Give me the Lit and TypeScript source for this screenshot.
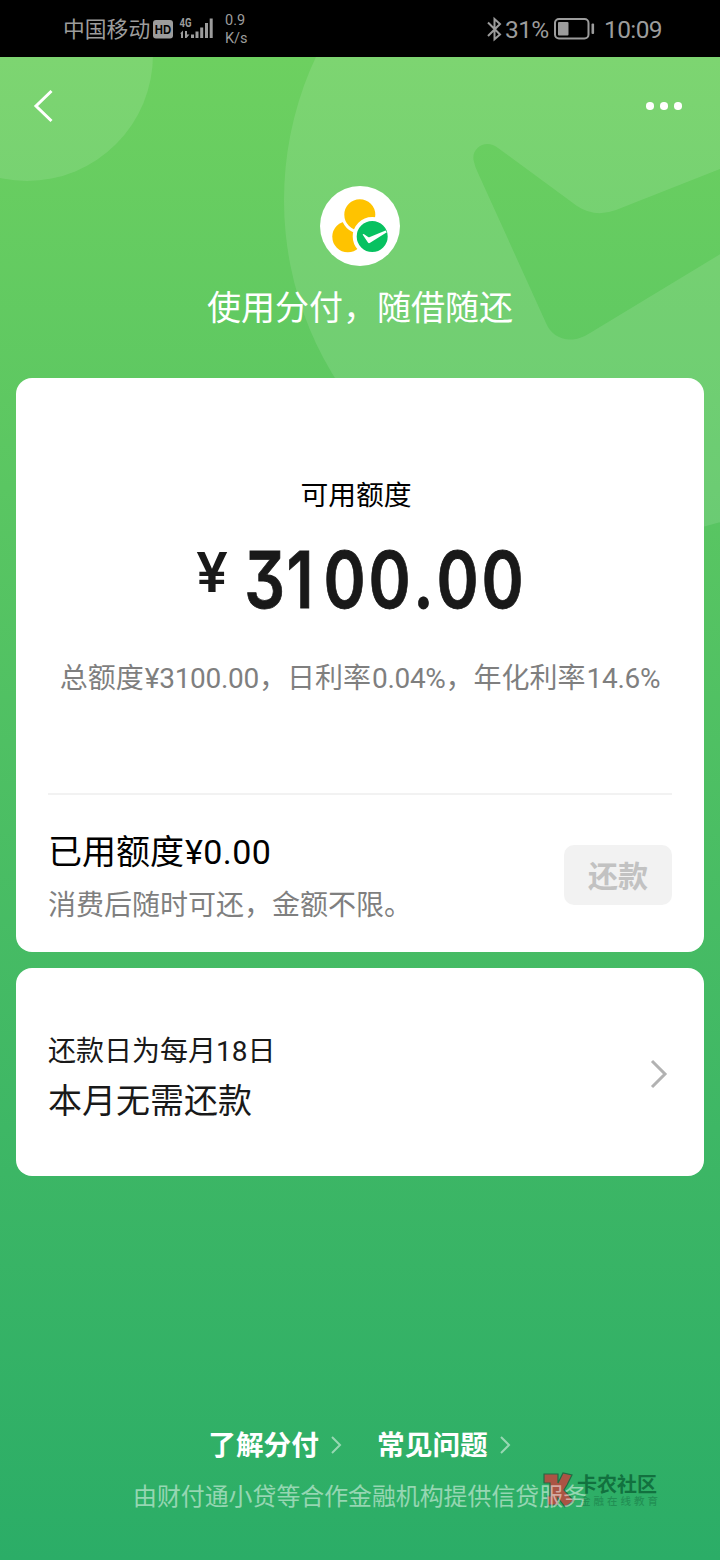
import { LitElement, html, css, svg } from "lit";
import { customElement, property } from "lit/decorators.js";

const fonts = css`Roboto, "Noto Sans CJK SC", sans-serif`;

@customElement("status-bar")
class StatusBar extends LitElement {
  static styles = css`
    :host {
      display: flex;
      align-items: flex-start;
      height: 57px;
      box-sizing: border-box;
      background: #000;
      color: #9c9c9c;
      padding: 0 58px 0 63px;
      font-family: ${fonts};
      white-space: nowrap;
    }
    .carrier { font-size: 21.800px; line-height: 60px; height: 57px; width: 89px; }
    .signal { width: 64px; height: 57px; display: block; }
    .rate { font-size: 14.5px; line-height: 18px; padding-top: 12px; margin-left: 9px; }
    .right { margin-left: auto; display: flex; height: 57px; line-height: 60px; font-size: 24.500px; }
    .icon { width: 16px; height: 57px; display: block; margin-right: 2px; }
    .battery { width: 42px; height: 57px; display: block; margin: 0 9px 0 4px; }
    .pct { letter-spacing: -0.6px; width: 44px; }
    .time { letter-spacing: -0.6px; width: 58px; }
  `;
  render() {
    return html`
      <span class="carrier">中国移动</span>
      <svg class="signal" viewBox="152 0 64 57">
        <rect x="153" y="20" width="20" height="18.500" rx="3" fill="#9c9c9c" />
        <text x="154.800" y="34" font-family="Liberation Sans" font-weight="700" font-size="12" textLength="16.400" lengthAdjust="spacingAndGlyphs" fill="#000">HD</text>
        <text x="179.500" y="27.300" font-family="Roboto" font-weight="700" font-size="12" textLength="12" lengthAdjust="spacingAndGlyphs" fill="#9c9c9c">4G</text>
        <g fill="#9c9c9c">
          <path d="M180 33.500l3-3V38h-2v-4.500zM185 31h2v3.500h2.500L186.500 38H185z" />
          <rect x="191" y="34.500" width="3" height="3.500" />
          <rect x="195.500" y="31.500" width="3" height="6.500" />
          <rect x="200.200" y="27.500" width="3" height="10.500" />
          <rect x="205" y="23" width="3" height="15" />
          <rect x="209.700" y="18.500" width="3" height="19.500" />
        </g>
      </svg>
      <div class="rate"><div>0.9</div><div>K/s</div></div>
      <div class="right">
        <svg class="icon" viewBox="487 0 16 57" fill="none" stroke="#9c9c9c" stroke-width="2">
          <path d="M488 22.500l12 12-5.500 4.800V19l5.500 5-12 12" />
        </svg>
        <span class="pct">31%</span>
        <svg class="battery" viewBox="553 0 42 57">
          <rect x="555" y="19" width="33.500" height="19.500" rx="4" fill="none" stroke="#9c9c9c" stroke-width="2" />
          <rect x="558" y="22" width="10.500" height="13.500" rx="1" fill="#9c9c9c" />
          <rect x="591.500" y="23.500" width="2.600" height="10.500" rx="1" fill="#9c9c9c" />
        </svg>
        <span class="time">10:09</span>
      </div>
    `;
  }
}

@customElement("chevron-icon")
class ChevronIcon extends LitElement {
  @property() points = "";
  @property({ type: Number }) w = 16;
  @property({ type: Number }) h = 28;
  @property({ type: Number }) thick = 3;
  static styles = css`
    :host { display: block; line-height: 0; }
    svg { overflow: visible; }
  `;
  render() {
    return html`<svg width=${this.w} height=${this.h} fill="none" stroke="currentColor" stroke-width=${this.thick} stroke-linejoin="miter">
      ${svg`<polyline points=${this.points} />`}
    </svg>`;
  }
}

@customElement("app-root")
class AppRoot extends LitElement {
  static styles = css`
    :host {
      display: flex;
      flex-direction: column;
      position: relative;
      width: 720px;
      height: 1560px;
      overflow: hidden;
      font-family: ${fonts};
      color: #191919;
      background: linear-gradient(180deg, #6dd060 57px, #2bad67 1560px);
      white-space: nowrap;
    }
    .backdrop { position: absolute; left: 0; top: 0; width: 720px; height: 560px; z-index: 0; }
    status-bar, .nav, .hero, .card, .footer { position: relative; z-index: 1; }
    .nav {
      height: 98px;
      box-sizing: border-box;
      padding: 0 38.500px 0 33.500px;
      display: flex;
      align-items: center;
      justify-content: space-between;
      color: #fff;
    }
    .more { display: flex; gap: 6.500px; }
    .more i { width: 7.500px; height: 7.500px; border-radius: 50%; background: #fff; }
    .hero { display: flex; flex-direction: column; align-items: center; padding-top: 31px; height: 192px; }
    .logo { width: 80px; height: 80px; display: block; }
    .title { color: #fff; font-size: 34px; line-height: 48px; margin-top: 18px; }
    .card { background: #fff; border-radius: 16px; margin: 0 16px; padding: 0 32px; box-sizing: border-box; }
    .quota { height: 574px; padding-top: 98px; display: flex; flex-direction: column; align-items: center; }
    .label { font-size: 27.800px; line-height: 40px; color: #000; margin-right: 8px; }
    .amount { display: block; width: 340px; height: 80px; margin-top: 24px; overflow: visible; }
    .digits { font-feature-settings: "cv09"; }
    .terms { font-size: 28px; line-height: 40px; color: #7f7f7f; margin-top: 39px; }
    .num { letter-spacing: -0.3px; margin-left: 1px; }
    .used {
      align-self: stretch;
      border-top: 2px solid #f2f2f2;
      margin-top: 94px;
      padding-top: 33px;
      display: flex;
      justify-content: space-between;
    }
    .used-title { font-size: 34px; line-height: 48px; color: #000; }
    .money { letter-spacing: 0.4px; margin-left: 1px; }
    .used-note { font-size: 28px; line-height: 40px; color: #7f7f7f; margin-top: 10px; }
    .repay {
      width: 108px;
      height: 60px;
      margin-top: 17px;
      border-radius: 10px;
      background: #f2f2f2;
      color: #c2c2c2;
      font-size: 30px;
      font-weight: 700;
      line-height: 64px;
      text-align: center;
    }
    .plan { height: 208px; margin-top: 16px; padding-right: 37px; display: flex; align-items: center; justify-content: space-between; }
    .plan-text { padding-top: 12px; }
    .plan chevron-icon { color: #b2b2b2; margin-top: 4px; }
    .plan-day { font-size: 28px; line-height: 40px; }
    .plan-state { font-size: 34px; line-height: 48px; margin-top: 5px; }
    .footer { margin-top: 249px; color: #fff; display: flex; flex-direction: column; align-items: center; }
    .links { display: flex; gap: 36px; margin-right: 2px; }
    .link { display: flex; align-items: center; gap: 12px; font-size: 27.700px; line-height: 42px; font-weight: 700; }
    .link chevron-icon { color: rgba(255, 255, 255, 0.5); margin-bottom: 2px; }
    .legal { font-size: 23.900px; line-height: 36px; margin-top: 12px; color: rgba(255, 255, 255, 0.5); }
    .mark { position: absolute; left: 540px; top: 1468px; width: 122px; height: 44px; z-index: 0; overflow: visible; }
  `;
  render() {
    const k = 0.82;
    const centers = [264.5, 300, 344.5, 389.5, 423.5, 457.5, 502.5].map((c) => (c / k).toFixed(1)).join(" ");
    return html`
      <svg class="backdrop" viewBox="0 0 720 560" fill="#fff" fill-opacity="0.11">
        <circle cx="27" cy="55" r="126" />
        <path
          fill-rule="evenodd"
          d="M284 200a337 337 0 1 0 674 0a337 337 0 1 0 -674 0z
             M474 162C470 148 486 138 498 148L577 206Q595 218 616 210L740 161V242L590 333C570 346 552 338 546 323L478 173Q475 167 474 162z"
        />
      </svg>
      <status-bar></status-bar>
      <div class="nav">
        <chevron-icon points="17.500,1 2,16 17.500,31" .w=${20} .h=${32} .thick=${3}></chevron-icon>
        <div class="more"><i></i><i></i><i></i></div>
      </div>
      <div class="hero">
        <svg class="logo" viewBox="0 0 80 80">
          <circle cx="40" cy="40" r="40" fill="#fff" />
          <circle cx="27.800" cy="50.800" r="15.500" fill="#ffc300" />
          <circle cx="39.800" cy="28.800" r="17" fill="#ffc300" stroke="#fff" stroke-width="3" />
          <circle cx="52.200" cy="50.500" r="17.500" fill="#07c160" stroke="#fff" stroke-width="4" />
          <path d="M42.600 48.600q.6-1 1.500-.4l4 2.700q.8.500 1.800.1l15.700-6.600 1.200 1.900-16.700 10.500q-1.500.9-2.300-.6z" fill="#fff" />
        </svg>
        <div class="title">使用分付，随借随还</div>
      </div>
      <section class="card quota">
        <div class="label">可用额度</div>
        <svg class="amount" viewBox="190 540 340 80" fill="#191919" font-family="Inter">
          <text x="196" y="592" font-size="55" font-weight="600" textLength="32" lengthAdjust="spacingAndGlyphs">¥</text>
          <text class="digits" x=${centers} y="608" transform="scale(0.82 1)" text-anchor="middle" font-size="78" font-weight="600" stroke="#191919" stroke-width="0.800">3100.00</text>
        </svg>
        <div class="terms">总额度<span class="num">¥3100.00</span>，日利率<span class="num">0.04%</span>，年化利率<span class="num">14.6%</span></div>
        <div class="used">
          <div>
            <div class="used-title">已用额度<span class="money">¥0.00</span></div>
            <div class="used-note">消费后随时可还，金额不限。</div>
          </div>
          <div class="repay">还款</div>
        </div>
      </section>
      <section class="card plan">
        <div class="plan-text">
          <div class="plan-day">还款日为每月18日</div>
          <div class="plan-state">本月无需还款</div>
        </div>
        <chevron-icon points="1,1 14,14 1,27" .w=${16} .h=${28} .thick=${3}></chevron-icon>
      </section>
      <svg class="mark" viewBox="540 1468 122 44">
        <path d="M544 1474h14v9l5-10 9 2-5 10-3 5 10 11-9 6-7-9v7h-10l-1-9h3v-13h-6z" fill="#b84a40" fill-opacity="0.9" stroke="#226b45" stroke-width="1.200" />
        <text x="577" y="1491.500" font-family="Noto Sans CJK SC" font-weight="700" font-size="20" textLength="80" fill="#12713f">卡农社区</text>
        <text x="580" y="1504.500" font-family="Noto Sans CJK SC" font-weight="500" font-size="10.500" textLength="78" fill="#1a7a48" fill-opacity="0.6">金融在线教育</text>
      </svg>
      <div class="footer">
        <div class="links">
          <div class="link">了解分付<chevron-icon points="1,1 9,9 1,17" .w=${10} .h=${18} .thick=${2}></chevron-icon></div>
          <div class="link">常见问题<chevron-icon points="1,1 9,9 1,17" .w=${10} .h=${18} .thick=${2}></chevron-icon></div>
        </div>
        <div class="legal">由财付通小贷等合作金融机构提供信贷服务</div>
      </div>
    `;
  }
}
